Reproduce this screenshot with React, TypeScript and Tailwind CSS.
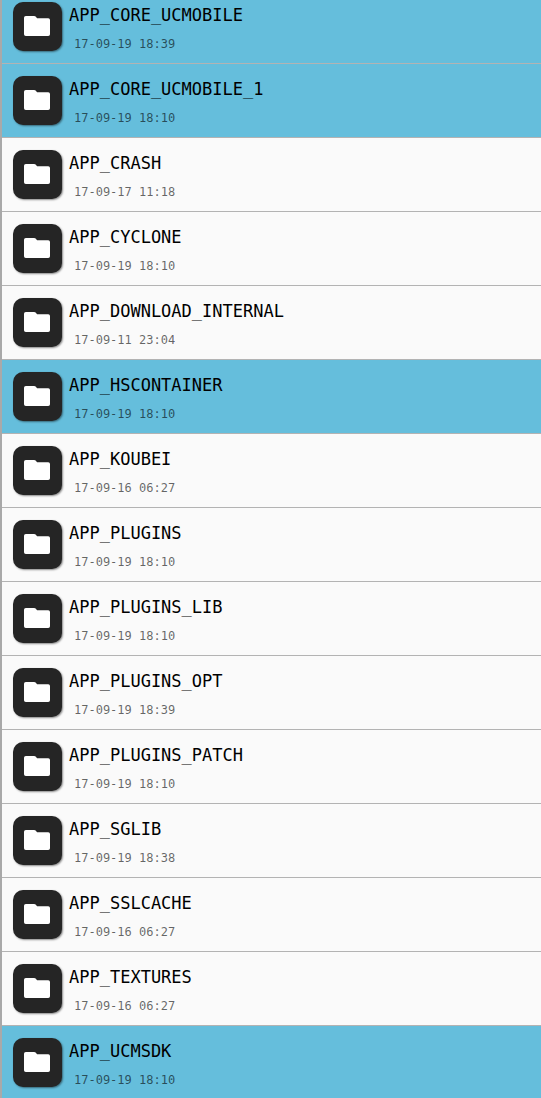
import React, { useState } from 'react';

type Folder = { name: string; modified: string; selected?: boolean };

const folders: Folder[] = [
  { name: 'APP_CORE_UCMOBILE', modified: '17-09-19 18:39', selected: true },
  { name: 'APP_CORE_UCMOBILE_1', modified: '17-09-19 18:10', selected: true },
  { name: 'APP_CRASH', modified: '17-09-17 11:18' },
  { name: 'APP_CYCLONE', modified: '17-09-19 18:10' },
  { name: 'APP_DOWNLOAD_INTERNAL', modified: '17-09-11 23:04' },
  { name: 'APP_HSCONTAINER', modified: '17-09-19 18:10', selected: true },
  { name: 'APP_KOUBEI', modified: '17-09-16 06:27' },
  { name: 'APP_PLUGINS', modified: '17-09-19 18:10' },
  { name: 'APP_PLUGINS_LIB', modified: '17-09-19 18:10' },
  { name: 'APP_PLUGINS_OPT', modified: '17-09-19 18:39' },
  { name: 'APP_PLUGINS_PATCH', modified: '17-09-19 18:10' },
  { name: 'APP_SGLIB', modified: '17-09-19 18:38' },
  { name: 'APP_SSLCACHE', modified: '17-09-16 06:27' },
  { name: 'APP_TEXTURES', modified: '17-09-16 06:27' },
  { name: 'APP_UCMSDK', modified: '17-09-19 18:10', selected: true },
];

function FolderIcon() {
  return (
    <span className="flex size-[49px] shrink-0 items-center justify-center rounded-[10px] bg-[#252525] pr-px pb-px shadow-[1px_1px_2px_rgba(0,0,0,0.45)]">
      <svg viewBox="0 0 26 20" className="h-5 w-[26px]" fill="#ffffff" aria-hidden="true">
        <path d="M1.8 0H10.2Q11 0 11.6 .6L13.1 2.2H24.2Q26 2.2 26 4V18.2Q26 20 24.2 20H1.8Q0 20 0 18.2V1.8Q0 0 1.8 0Z" />
      </svg>
    </span>
  );
}

function FolderRow({ folder }: { folder: Folder }) {
  const [selected, setSelected] = useState(Boolean(folder.selected));
  return (
    <li className="border-b border-[#b3b3b3]">
      <button
        type="button"
        aria-pressed={selected}
        onClick={() => setSelected(!selected)}
        className={`flex w-full items-start gap-[7px] pt-3 pb-[11px] pl-[11px] text-left ${selected ? 'bg-[#65bedc]' : 'bg-[#fafafa]'}`}
      >
        <FolderIcon />
        <span className="flex min-w-0 flex-col gap-2">
          <span className="text-[17px] leading-[26px] whitespace-nowrap text-black">{folder.name}</span>
          <span className="pl-[5px] text-xs leading-4 whitespace-nowrap text-black/60">{folder.modified}</span>
        </span>
      </button>
    </li>
  );
}

export default function App() {
  return (
    <main className="h-screen overflow-hidden border-l-2 border-[#a9a9a9] bg-[#fafafa] font-['DejaVu_Sans_Mono','Liberation_Mono',monospace]">
      <ul className="-mt-2.5">
        {folders.map((folder) => (
          <FolderRow key={folder.name} folder={folder} />
        ))}
      </ul>
    </main>
  );
}
